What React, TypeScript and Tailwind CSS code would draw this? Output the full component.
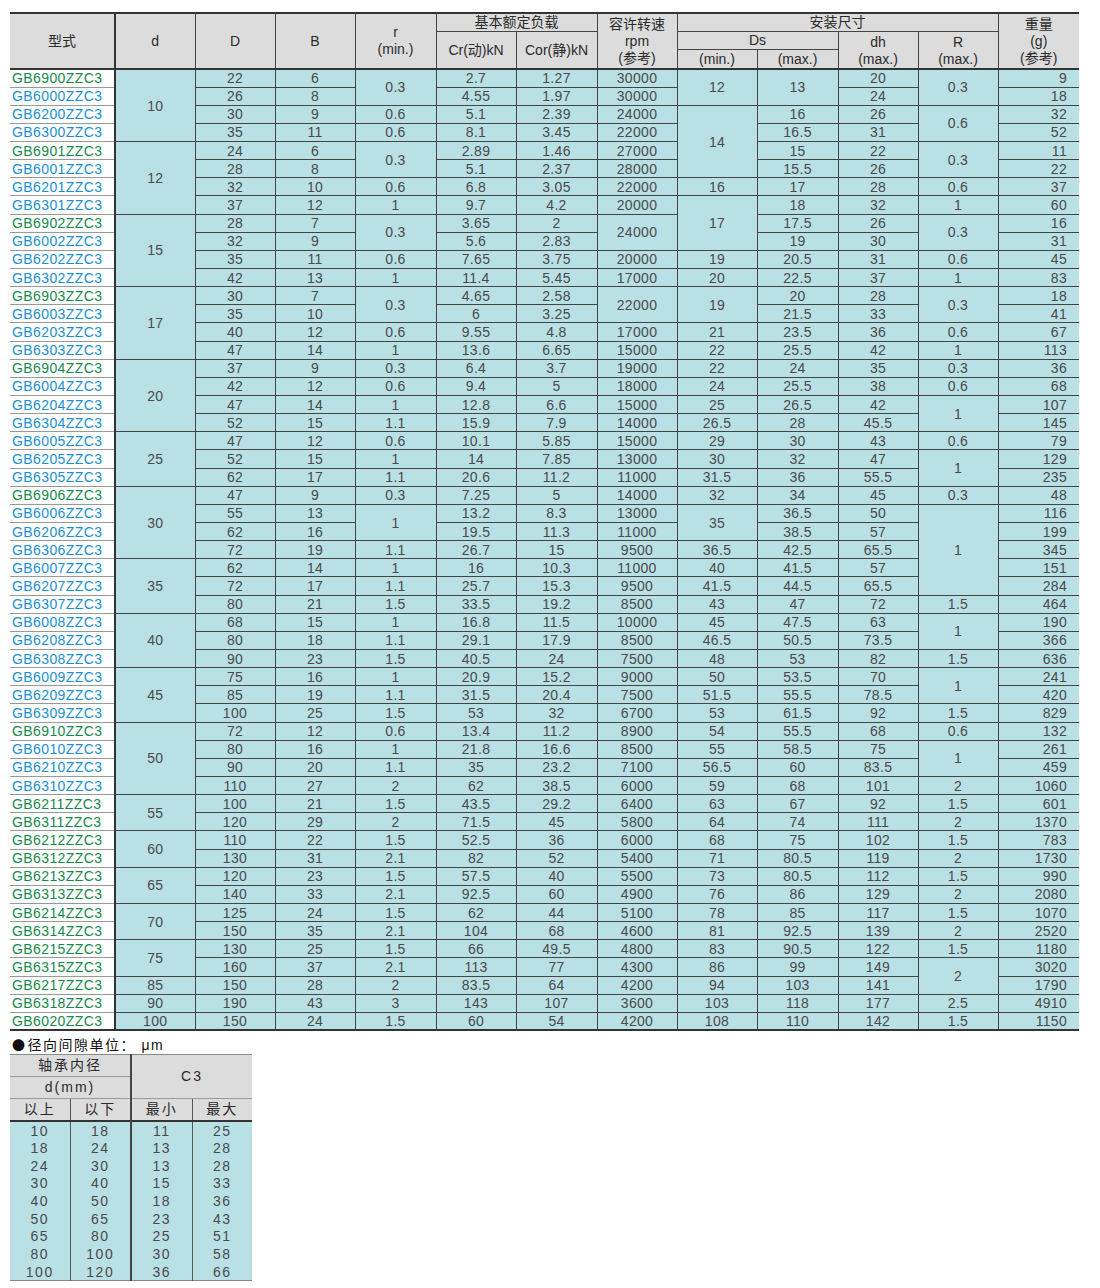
type Cell = string | null;

const rows: Cell[][] = [
  ["GB6900ZZC3", "10*4", "22", "6", "0.3*2", "2.7", "1.27", "30000", "12*2", "13*2", "20", "0.3*2", "9"],
  ["GB6000ZZC3", null, "26", "8", null, "4.55", "1.97", "30000", null, null, "24", null, "18"],
  ["GB6200ZZC3", null, "30", "9", "0.6", "5.1", "2.39", "24000", "14*4", "16", "26", "0.6*2", "32"],
  ["GB6300ZZC3", null, "35", "11", "0.6", "8.1", "3.45", "22000", null, "16.5", "31", null, "52"],
  ["GB6901ZZC3", "12*4", "24", "6", "0.3*2", "2.89", "1.46", "27000", null, "15", "22", "0.3*2", "11"],
  ["GB6001ZZC3", null, "28", "8", null, "5.1", "2.37", "28000", null, "15.5", "26", null, "22"],
  ["GB6201ZZC3", null, "32", "10", "0.6", "6.8", "3.05", "22000", "16", "17", "28", "0.6", "37"],
  ["GB6301ZZC3", null, "37", "12", "1", "9.7", "4.2", "20000", "17*3", "18", "32", "1", "60"],
  ["GB6902ZZC3", "15*4", "28", "7", "0.3*2", "3.65", "2", "24000*2", null, "17.5", "26", "0.3*2", "16"],
  ["GB6002ZZC3", null, "32", "9", null, "5.6", "2.83", null, null, "19", "30", null, "31"],
  ["GB6202ZZC3", null, "35", "11", "0.6", "7.65", "3.75", "20000", "19", "20.5", "31", "0.6", "45"],
  ["GB6302ZZC3", null, "42", "13", "1", "11.4", "5.45", "17000", "20", "22.5", "37", "1", "83"],
  ["GB6903ZZC3", "17*4", "30", "7", "0.3*2", "4.65", "2.58", "22000*2", "19*2", "20", "28", "0.3*2", "18"],
  ["GB6003ZZC3", null, "35", "10", null, "6", "3.25", null, null, "21.5", "33", null, "41"],
  ["GB6203ZZC3", null, "40", "12", "0.6", "9.55", "4.8", "17000", "21", "23.5", "36", "0.6", "67"],
  ["GB6303ZZC3", null, "47", "14", "1", "13.6", "6.65", "15000", "22", "25.5", "42", "1", "113"],
  ["GB6904ZZC3", "20*4", "37", "9", "0.3", "6.4", "3.7", "19000", "22", "24", "35", "0.3", "36"],
  ["GB6004ZZC3", null, "42", "12", "0.6", "9.4", "5", "18000", "24", "25.5", "38", "0.6", "68"],
  ["GB6204ZZC3", null, "47", "14", "1", "12.8", "6.6", "15000", "25", "26.5", "42", "1*2", "107"],
  ["GB6304ZZC3", null, "52", "15", "1.1", "15.9", "7.9", "14000", "26.5", "28", "45.5", null, "145"],
  ["GB6005ZZC3", "25*3", "47", "12", "0.6", "10.1", "5.85", "15000", "29", "30", "43", "0.6", "79"],
  ["GB6205ZZC3", null, "52", "15", "1", "14", "7.85", "13000", "30", "32", "47", "1*2", "129"],
  ["GB6305ZZC3", null, "62", "17", "1.1", "20.6", "11.2", "11000", "31.5", "36", "55.5", null, "235"],
  ["GB6906ZZC3", "30*4", "47", "9", "0.3", "7.25", "5", "14000", "32", "34", "45", "0.3", "48"],
  ["GB6006ZZC3", null, "55", "13", "1*2", "13.2", "8.3", "13000", "35*2", "36.5", "50", "1*5", "116"],
  ["GB6206ZZC3", null, "62", "16", null, "19.5", "11.3", "11000", null, "38.5", "57", null, "199"],
  ["GB6306ZZC3", null, "72", "19", "1.1", "26.7", "15", "9500", "36.5", "42.5", "65.5", null, "345"],
  ["GB6007ZZC3", "35*3", "62", "14", "1", "16", "10.3", "11000", "40", "41.5", "57", null, "151"],
  ["GB6207ZZC3", null, "72", "17", "1.1", "25.7", "15.3", "9500", "41.5", "44.5", "65.5", null, "284"],
  ["GB6307ZZC3", null, "80", "21", "1.5", "33.5", "19.2", "8500", "43", "47", "72", "1.5", "464"],
  ["GB6008ZZC3", "40*3", "68", "15", "1", "16.8", "11.5", "10000", "45", "47.5", "63", "1*2", "190"],
  ["GB6208ZZC3", null, "80", "18", "1.1", "29.1", "17.9", "8500", "46.5", "50.5", "73.5", null, "366"],
  ["GB6308ZZC3", null, "90", "23", "1.5", "40.5", "24", "7500", "48", "53", "82", "1.5", "636"],
  ["GB6009ZZC3", "45*3", "75", "16", "1", "20.9", "15.2", "9000", "50", "53.5", "70", "1*2", "241"],
  ["GB6209ZZC3", null, "85", "19", "1.1", "31.5", "20.4", "7500", "51.5", "55.5", "78.5", null, "420"],
  ["GB6309ZZC3", null, "100", "25", "1.5", "53", "32", "6700", "53", "61.5", "92", "1.5", "829"],
  ["GB6910ZZC3", "50*4", "72", "12", "0.6", "13.4", "11.2", "8900", "54", "55.5", "68", "0.6", "132"],
  ["GB6010ZZC3", null, "80", "16", "1", "21.8", "16.6", "8500", "55", "58.5", "75", "1*2", "261"],
  ["GB6210ZZC3", null, "90", "20", "1.1", "35", "23.2", "7100", "56.5", "60", "83.5", null, "459"],
  ["GB6310ZZC3", null, "110", "27", "2", "62", "38.5", "6000", "59", "68", "101", "2", "1060"],
  ["GB6211ZZC3", "55*2", "100", "21", "1.5", "43.5", "29.2", "6400", "63", "67", "92", "1.5", "601"],
  ["GB6311ZZC3", null, "120", "29", "2", "71.5", "45", "5800", "64", "74", "111", "2", "1370"],
  ["GB6212ZZC3", "60*2", "110", "22", "1.5", "52.5", "36", "6000", "68", "75", "102", "1.5", "783"],
  ["GB6312ZZC3", null, "130", "31", "2.1", "82", "52", "5400", "71", "80.5", "119", "2", "1730"],
  ["GB6213ZZC3", "65*2", "120", "23", "1.5", "57.5", "40", "5500", "73", "80.5", "112", "1.5", "990"],
  ["GB6313ZZC3", null, "140", "33", "2.1", "92.5", "60", "4900", "76", "86", "129", "2", "2080"],
  ["GB6214ZZC3", "70*2", "125", "24", "1.5", "62", "44", "5100", "78", "85", "117", "1.5", "1070"],
  ["GB6314ZZC3", null, "150", "35", "2.1", "104", "68", "4600", "81", "92.5", "139", "2", "2520"],
  ["GB6215ZZC3", "75*2", "130", "25", "1.5", "66", "49.5", "4800", "83", "90.5", "122", "1.5", "1180"],
  ["GB6315ZZC3", null, "160", "37", "2.1", "113", "77", "4300", "86", "99", "149", "2*2", "3020"],
  ["GB6217ZZC3", "85", "150", "28", "2", "83.5", "64", "4200", "94", "103", "141", null, "1790"],
  ["GB6318ZZC3", "90", "190", "43", "3", "143", "107", "3600", "103", "118", "177", "2.5", "4910"],
  ["GB6020ZZC3", "100", "150", "24", "1.5", "60", "54", "4200", "108", "110", "142", "1.5", "1150"],
];

const clearance = [
  ["10", "18", "11", "25"],
  ["18", "24", "13", "28"],
  ["24", "30", "13", "28"],
  ["30", "40", "15", "33"],
  ["40", "50", "18", "36"],
  ["50", "65", "23", "43"],
  ["65", "80", "25", "51"],
  ["80", "100", "30", "58"],
  ["100", "120", "36", "66"],
];

const widths = [105, 80, 80, 80, 81, 80, 81, 80, 80, 81, 80, 80, 81];

const hd = "border border-[#444] bg-[#dcdcdc] text-center align-middle p-0 font-normal leading-[17px] text-[14px]";
const bd = "border border-[#444] bg-[#b9e0e5] text-center align-middle p-0 leading-none";

function MainTable() {
  return (
    <table className="ml-[10px] border-collapse table-fixed w-[1069px] text-[#2a2a2a] border-t-2 border-t-[#333] border-b-2 border-b-[#333]">
      <colgroup>
        {widths.map((w, i) => (
          <col key={i} style={{ width: w }} />
        ))}
      </colgroup>
      <thead>
        <tr className="h-[18px]">
          <th rowSpan={3} className={hd + " border-l-0 border-r-2 border-r-[#333]"}>型式</th>
          <th rowSpan={3} className={hd}>d</th>
          <th rowSpan={3} className={hd}>D</th>
          <th rowSpan={3} className={hd}>B</th>
          <th rowSpan={3} className={hd}>
            r<br />(min.)
          </th>
          <th colSpan={2} className={hd + " leading-[16px]"}>基本额定负载</th>
          <th rowSpan={3} className={hd + " leading-[17.5px]"}>
            容许转速<br />rpm<br />(参考)
          </th>
          <th colSpan={4} className={hd + " leading-[16px]"}>安装尺寸</th>
          <th rowSpan={3} className={hd + " border-r-0 leading-[17.5px]"}>
            重量<br />(g)<br />(参考)
          </th>
        </tr>
        <tr className="h-[18px]">
          <th rowSpan={2} className={hd}>Cr(动)kN</th>
          <th rowSpan={2} className={hd}>Cor(静)kN</th>
          <th colSpan={2} className={hd}>Ds</th>
          <th rowSpan={2} className={hd + " pt-[2px]"}>
            dh<br />(max.)
          </th>
          <th rowSpan={2} className={hd + " pt-[2px]"}>
            R<br />(max.)
          </th>
        </tr>
        <tr className="h-[18px] border-b-2 border-b-[#333]">
          <th className={hd}>(min.)</th>
          <th className={hd}>(max.)</th>
        </tr>
      </thead>
      <tbody className="border-t-2 border-t-[#333]">
        {rows.map((r, i) => {
          const green = r[0]!.startsWith("GB69") || i >= 40;
          return (
            <tr key={i} className="h-[18.15px]">
              {r.map((c, j) => {
                if (c === null) return null;
                if (j === 0) {
                  return (
                    <td
                      key={j}
                      className={
                        "border-y border-y-[#999] border-l-0 border-r-2 border-r-[#333] bg-white p-0 pl-[2px] leading-none text-[14px] tracking-[0.4px] " +
                        (green ? "text-[#16894c]" : "text-[#1a8fd2]")
                      }
                    >
                      {c}
                    </td>
                  );
                }
                const [v, s] = c.split("*");
                const last = j === 12;
                return (
                  <td
                    key={j}
                    rowSpan={s ? Number(s) : undefined}
                    className={
                      bd +
                      " text-[14px] text-[#4a4a4a] tracking-[0.3px] " +
                      (last ? "border-r-0 text-right pr-[12px]" : "")
                    }
                  >
                    {v}
                  </td>
                );
              })}
            </tr>
          );
        })}
      </tbody>
    </table>
  );
}

function ClearanceTable() {
  const h = "bg-[#dcdcdc] text-center align-middle p-0 font-normal tracking-[2px] border-b border-b-[#999]";
  return (
    <table className="ml-[10px] border-collapse table-fixed w-[242px] text-[14px] text-[#2a2a2a] border-t border-t-[#888] border-b border-b-[#888]">
      <colgroup>
        <col style={{ width: 60 }} />
        <col style={{ width: 61 }} />
        <col style={{ width: 61 }} />
        <col style={{ width: 60 }} />
      </colgroup>
      <thead>
        <tr className="h-[20px]">
          <th colSpan={2} className={h}>轴承内径</th>
          <th colSpan={2} rowSpan={2} className={h + " border-l-2 border-l-[#444] tracking-[1px]"}>C3</th>
        </tr>
        <tr className="h-[21px]">
          <th colSpan={2} className={h}>d(mm)</th>
        </tr>
        <tr className="h-[21px] border-b-2 border-b-[#333]">
          <th className={h + " border-r border-r-[#555]"}>以上</th>
          <th className={h + " border-r-2 border-r-[#444]"}>以下</th>
          <th className={h + " border-r border-r-[#555]"}>最小</th>
          <th className={h}>最大</th>
        </tr>
      </thead>
      <tbody>
        {clearance.map((r, i) => (
          <tr key={i} className="h-[17.7px]">
            {r.map((c, j) => (
              <td
                key={j}
                className={
                  "bg-[#b9e0e5] text-center p-0 leading-none text-[#4a4a4a] tracking-[1.5px] " +
                  (j === 0 || j === 2 ? "border-r border-r-[#555]" : j === 1 ? "border-r-2 border-r-[#444]" : "")
                }
              >
                {c}
              </td>
            ))}
          </tr>
        ))}
      </tbody>
    </table>
  );
}

export default function App() {
  return (
    <div className="w-[1100px] min-h-[1288px] bg-white pt-[12px] font-['Liberation_Sans','Noto_Sans_CJK_SC',sans-serif]">
      <MainTable />
      <div className="ml-[12px] mt-[5px] h-[18px] flex items-center text-[14px] leading-[18px] tracking-[1.5px] text-[#111]">
        <span className="font-['Noto_Sans_CJK_SC',sans-serif] text-[13px] mr-[1px]">●</span>
        径向间隙单位： μm
      </div>
      <ClearanceTable />
    </div>
  );
}
